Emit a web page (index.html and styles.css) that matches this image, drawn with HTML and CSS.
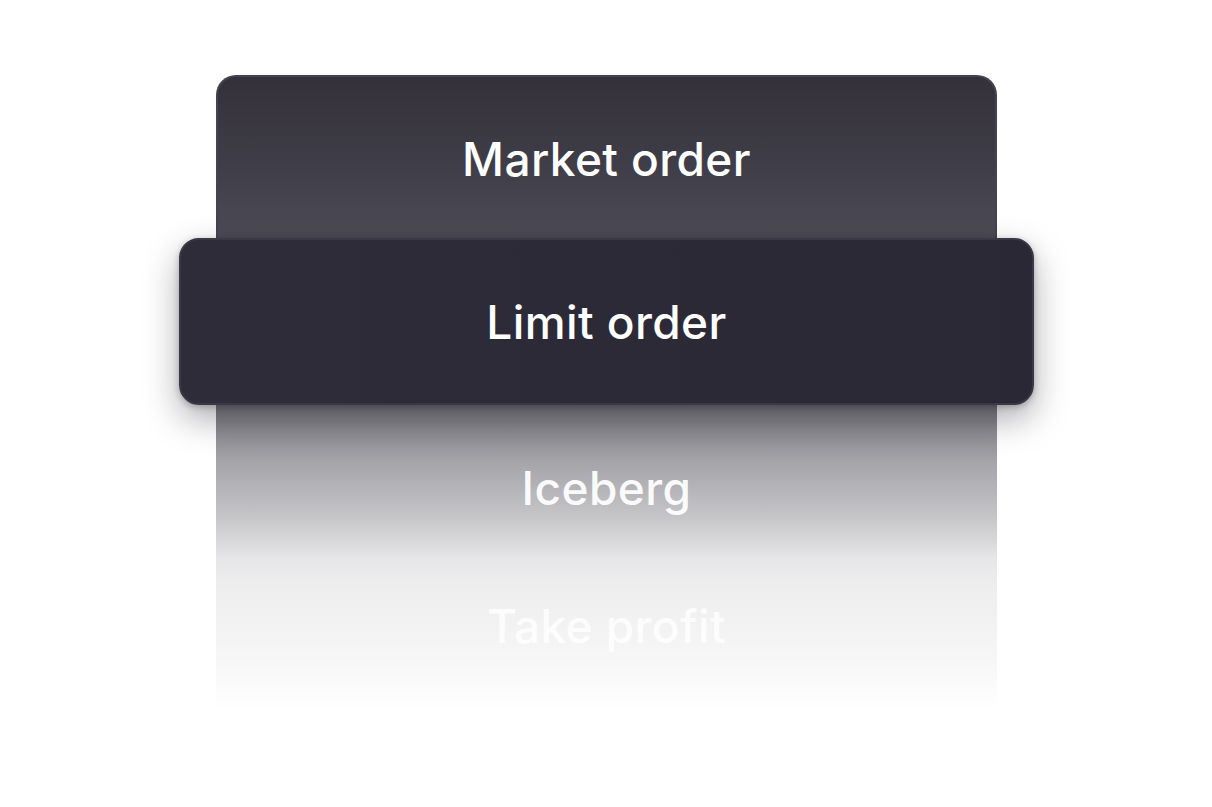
FILE: index.html
```html
<!DOCTYPE html>
<html lang="en">
<head>
    <meta charset="UTF-8">
    <meta name="viewport" content="width=device-width, initial-scale=1.0">
    <title>Order type</title>
    <link rel="stylesheet" href="styles.css">
</head>
<body>
    <div class="picker">
        <div class="option top">Market order</div>
        <div class="option selected">Limit order</div>
        <div class="fade">
            <div class="option faded">Iceberg</div>
            <div class="option faded last">Take profit</div>
        </div>
    </div>
</body>
</html>
```

FILE: styles.css
```css
body {
    margin: 0;
    background: #ffffff;
    font-family: Inter, "Noto Sans", sans-serif;
}
.picker {
    width: 781px;
    margin: 75px auto 0;
    padding-left: 1px;
    display: flex;
    flex-direction: column;
}
.option {
    display: flex;
    justify-content: center;
    align-items: center;
    color: #ffffff;
    font-size: 46px;
    font-weight: 500;
    letter-spacing: 0.4px;
}
.option.top {
    height: 163px;
    box-sizing: border-box;
    padding-top: 2px;
    border-radius: 20px 20px 0 0;
    border: 2px solid #45434d;
    border-bottom: none;
    background: linear-gradient(to bottom, #34313b 0%, #3f3d47 55%, #4d4b55 100%);
}
.option.selected {
    position: relative;
    z-index: 1;
    height: 167px;
    margin: 0 -37px;
    border-radius: 20px;
    border: 2px solid #3a3844;
    box-sizing: border-box;
    background: linear-gradient(to right, #2f2c39, #2b2835);
    box-shadow: 0 14px 34px rgba(20, 18, 28, 0.35), 0 2px 6px rgba(20, 18, 28, 0.25);
}
.fade {
    height: 306px;
    display: flex;
    flex-direction: column;
    background: linear-gradient(to bottom, #79787e 0%, #a4a3a8 18%, #c6c6c9 37%, #e6e6e8 50%, #eeeeef 60%, #f5f5f5 80%, #ffffff 100%);
}
.option.faded {
    height: 166px;
    color: rgba(255, 255, 255, 0.96);
}
.option.faded.last {
    height: 110px;
    margin-top: -56px;
    padding-top: 56px;
    color: rgba(255, 255, 255, 0.85);
}
```
